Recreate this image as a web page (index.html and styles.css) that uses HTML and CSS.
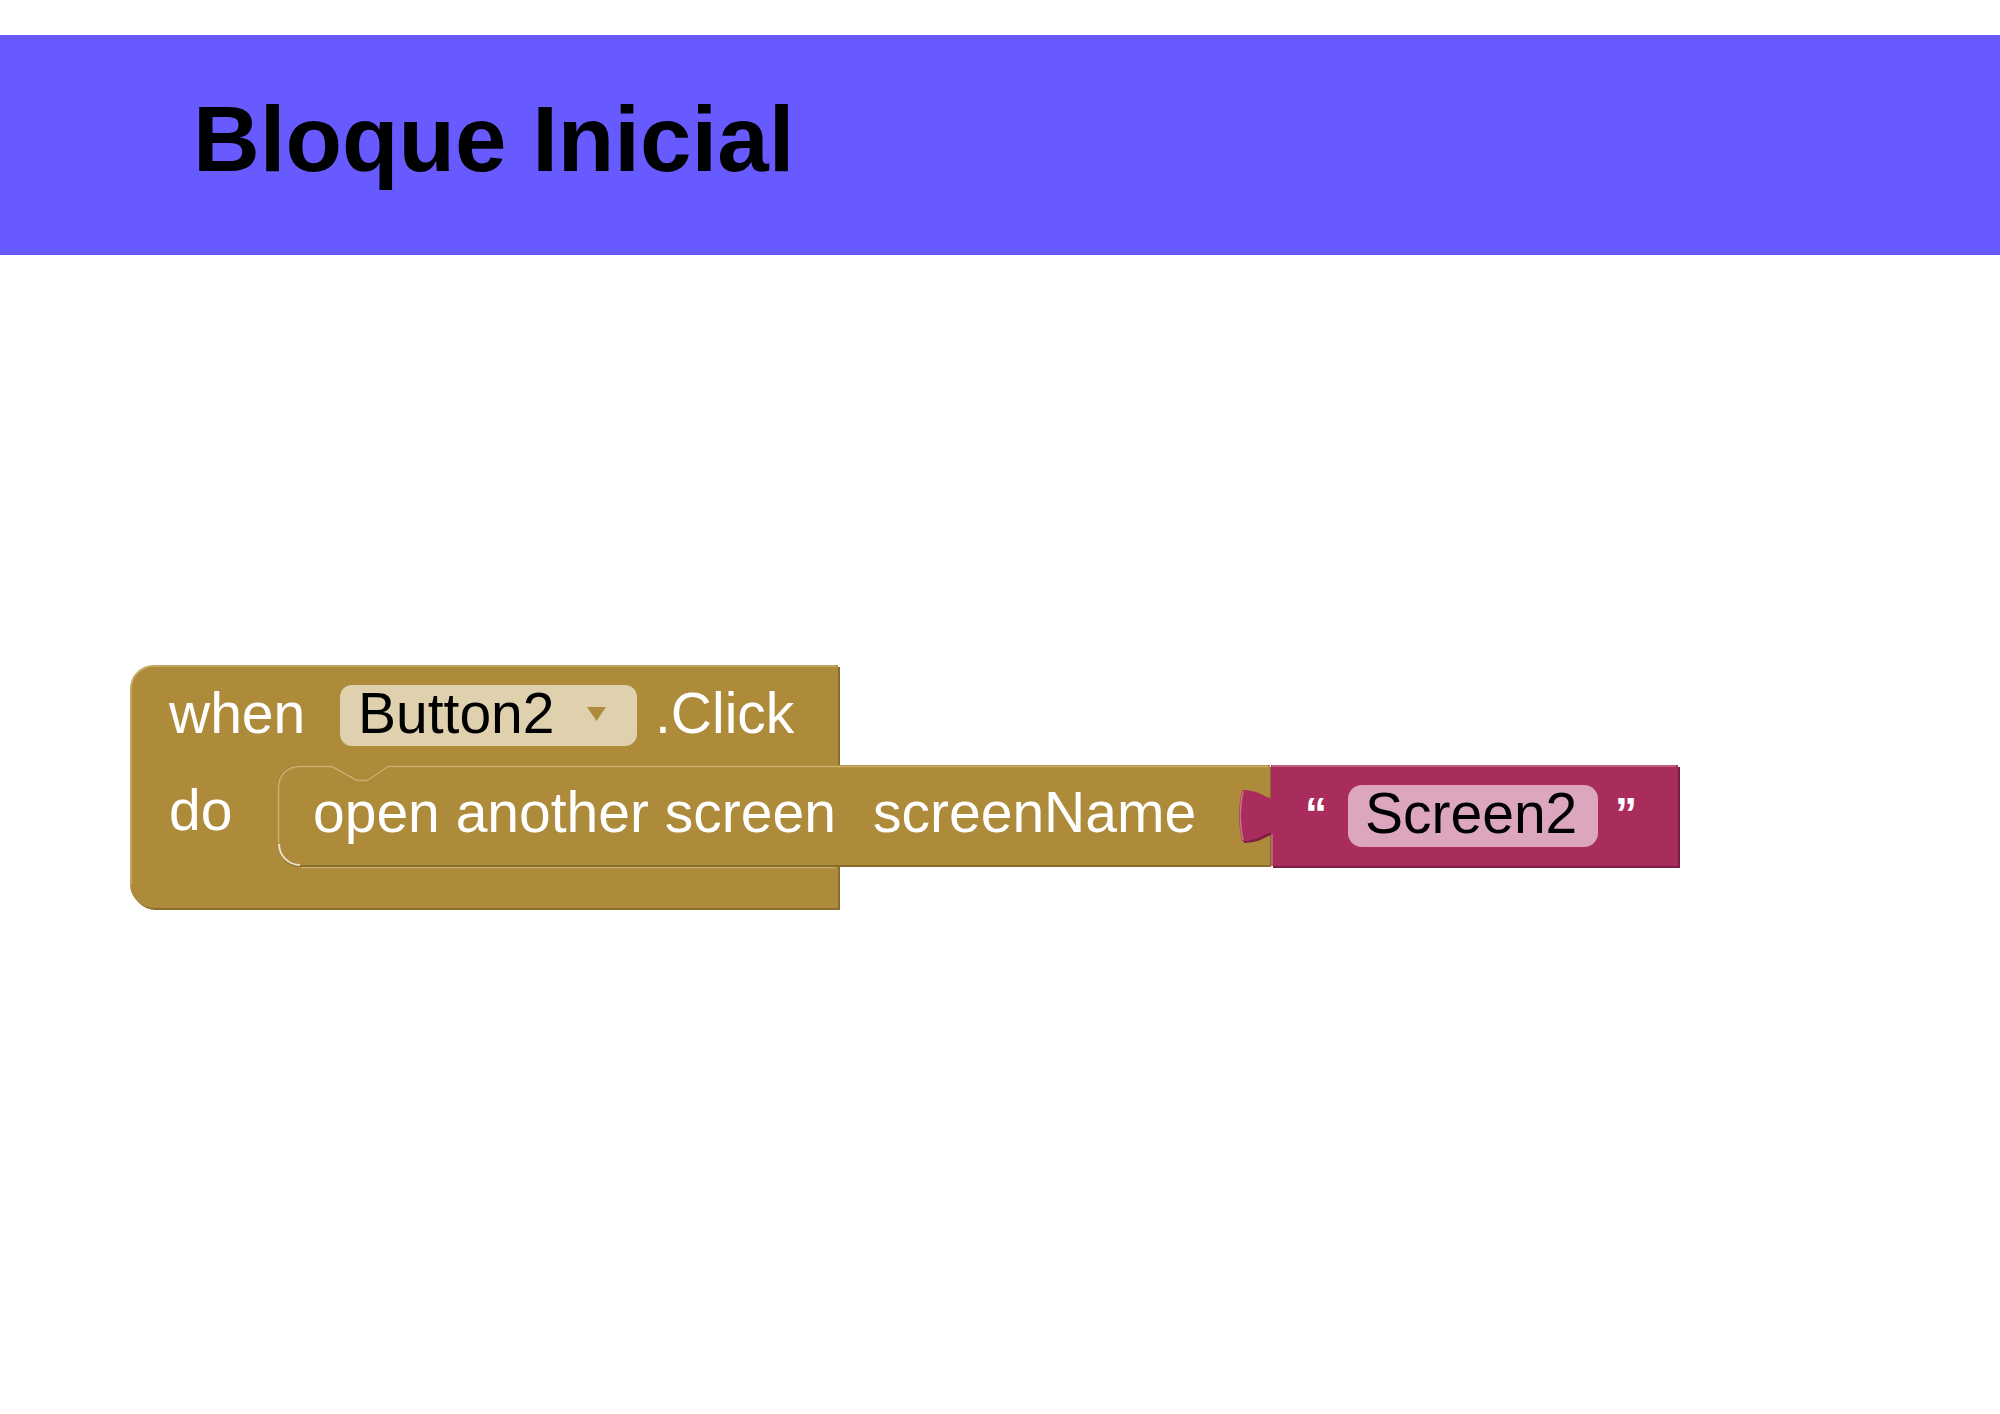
FILE: index.html
```html
<!DOCTYPE html>
<html lang="es">
<head>
<meta charset="utf-8">
<title>Bloque Inicial</title>
<link rel="stylesheet" href="styles.css">
</head>
<body>
<header class="banner">
  <h1 class="title">Bloque Inicial</h1>
</header>
<main class="canvas">
  <svg class="blocks" width="1580" height="265" viewBox="120 655 1580 265" xmlns="http://www.w3.org/2000/svg">
    <!-- event block (when ... do) -->
    <path class="gold-dark" transform="translate(2,2)" d="M130,689 A24,24 0 0 1 154,665 H838 V765 H388 L367,779 H357 L332,765 H299 A22,22 0 0 0 277,787 V843 A22,22 0 0 0 299,865 H838 V908 H154 A24,24 0 0 1 130,884 Z"/>
    <path class="gold" d="M130,689 A24,24 0 0 1 154,665 H838 V765 H388 L367,779 H357 L332,765 H299 A22,22 0 0 0 277,787 V843 A22,22 0 0 0 299,865 H838 V908 H154 A24,24 0 0 1 130,884 Z"/>
    <path class="hl" d="M131,884 V689 A23,23 0 0 1 154,666 H836"/>
    <path class="hl" d="M301,867.5 H836"/>

    <!-- statement block -->
    <path class="gold-dark" transform="translate(1,2)" d="M277,787 A22,22 0 0 1 299,765 H332 L357,779 H367 L388,765 H1270 V865 H299 A22,22 0 0 1 277,843 Z"/>
    <path class="gold" d="M277,787 A22,22 0 0 1 299,765 H332 L357,779 H367 L388,765 H1270 V865 H299 A22,22 0 0 1 277,843 Z"/>
    <path class="hl" d="M278.5,843 V787 A20.5,20.5 0 0 1 299,766.5 H332 L357,780.5 H367 L388,766.5 H1268"/>
    <path class="hl-strong" d="M279,844 A21,21 0 0 0 300,865"/>

    <!-- text block -->
    <path class="mag-dark" transform="translate(2,2)" d="M1271,765 H1678 V866 H1271 V833 C1265,833 1259,841 1242,841 Q1236,815.5 1242,790 C1259,790 1265,798 1271,798 Z"/>
    <path class="mag" d="M1271,765 H1678 V866 H1271 V833 C1265,833 1259,841 1242,841 Q1236,815.5 1242,790 C1259,790 1265,798 1271,798 Z"/>
    <path class="hl" d="M1272,834 V866 M1272,766 H1676"/>
    <path class="hl" d="M1243,791 Q1237.5,815.5 1243,840"/>

    <!-- fields -->
    <rect class="pill-gold" x="340" y="685" width="297" height="61" rx="12"/>
    <polygon class="tri" points="587,707 606,707 596.5,721"/>
    <rect class="pill-pink" x="1348" y="785" width="250" height="62" rx="14"/>

    <text class="lbl" x="169" y="733">when</text>
    <text class="lbl dark" x="358" y="733">Button2</text>
    <text class="lbl" x="655" y="733">.Click</text>
    <text class="lbl" x="169" y="830">do</text>
    <text class="lbl" x="313" y="832">open another screen</text>
    <text class="lbl" x="873" y="832">screenName</text>
    <text class="quote" x="1305" y="829">“</text>
    <text class="lbl dark" x="1365" y="833">Screen2</text>
    <text class="quote" x="1615" y="829">”</text>
  </svg>
</main>
</body>
</html>
```
FILE: styles.css
```css
html, body {
  margin: 0;
  padding: 0;
  background: #ffffff;
}

body {
  width: 2000px;
  height: 1414px;
  overflow: hidden;
  font-family: "Liberation Sans", Arial, sans-serif;
}

.banner {
  margin-top: 35px;
  height: 220px;
  background: #675bff;
  box-sizing: border-box;
  padding: 58px 0 0 193px;
}

.title {
  margin: 0;
  font-family: "Liberation Sans", Arial, sans-serif;
  font-weight: 700;
  font-size: 92.5px;
  line-height: 92px;
  color: #000000;
  letter-spacing: 0;
}

.canvas {
  display: block;
  padding: 400px 0 0 120px;
}

.blocks {
  display: block;
}

.gold { fill: #ae8b3b; }
.gold-dark { fill: #8a6c2b; }
.mag { fill: #a82d5d; }
.mag-dark { fill: #7c1d43; }

.hl {
  fill: none;
  stroke: rgba(255, 240, 210, 0.35);
  stroke-width: 1.5;
}

.hl-strong {
  fill: none;
  stroke: rgba(255, 255, 255, 0.75);
  stroke-width: 2;
}

.pill-gold { fill: #dfd1ae; }
.pill-pink { fill: #dca7be; }
.tri { fill: #ae8b3b; }

.lbl {
  font-family: "Liberation Sans", Arial, sans-serif;
  font-size: 57px;
  fill: #ffffff;
}

.lbl.dark { fill: #000000; }

.quote {
  font-family: "Liberation Sans", Arial, sans-serif;
  font-weight: 700;
  font-size: 44px;
  fill: #ffffff;
}
```
